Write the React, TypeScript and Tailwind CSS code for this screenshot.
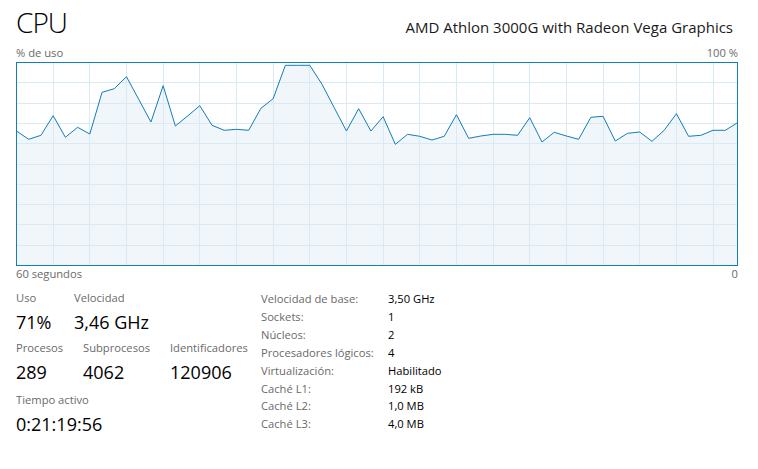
const usage = [
  131, 139.3, 135.3, 115.7, 137.3, 127.3, 134, 92.3, 88.7, 76.7, 99.3, 122, 85.7, 126, 116, 105.7, 125.3, 130.3, 129.3, 130.3,
  108.3, 98.7, 65.3, 65.3, 65.3, 84.3, 107.7, 131, 108.7, 131, 116.7, 144.3, 134.3, 136.3, 140, 136.3, 114.7, 138.3, 136, 134.3,
  134.3, 135.3, 117.7, 142, 132.3, 136, 139.3, 117.3, 116.3, 141, 133.3, 132, 141.3, 130.3, 113.7, 136.3, 135.3, 130.3, 130.3, 122.7,
];

const W = 722;
const H = 204;

const CpuGraph = () => {
  const pts = usage.map((y, i) => [0.5 + (i * 721) / 59, y - 62]);
  const line = pts.map(p => p.join(",")).join(" ");
  const area = `0.5,${H - 0.5} ${line} ${W - 0.5},${H - 0.5}`;
  const cols = Array.from({ length: 19 }, (_, k) => Math.round(36.67 * (k + 1)) + 0.5);
  const rows = Array.from({ length: 9 }, (_, k) => Math.round(20.3 * (k + 1)) + 0.5);

  return (
    <svg width={W} height={H} viewBox={`0 0 ${W} ${H}`} className="block">
      <rect x="0" y="0" width={W} height={H} fill="#ffffff" />
      <polygon points={area} fill="#f1f6fa" />
      {cols.map(x => (
        <line key={"c" + x} x1={x} y1="0" x2={x} y2={H} stroke="#d9eaf4" strokeWidth="1" />
      ))}
      {rows.map(y => (
        <line key={"r" + y} x1="0" y1={y} x2={W} y2={y} stroke="#d9eaf4" strokeWidth="1" />
      ))}
      <polyline points={line} fill="none" stroke="#117dbb" strokeWidth="1" strokeLinejoin="round" />
      <rect x="0.5" y="0.5" width={W - 1} height={H - 1} fill="none" stroke="#117dbb" strokeWidth="1" />
    </svg>
  );
};

const Stat = (props: { label: string; value: string; w?: string }) => (
  <div className={`flex flex-col ${props.w ?? ""}`}>
    <span className="text-[11.2px] leading-[16px] text-[#6a6a6a]">{props.label}</span>
    <span className="text-[18px] leading-[24px] text-black mt-[4px]">{props.value}</span>
  </div>
);

const details = [
  ["Velocidad de base:", "3,50 GHz"],
  ["Sockets:", "1"],
  ["Núcleos:", "2"],
  ["Procesadores lógicos:", "4"],
  ["Virtualización:", "Habilitado"],
  ["Caché L1:", "192 kB"],
  ["Caché L2:", "1,0 MB"],
  ["Caché L3:", "4,0 MB"],
];

export default function App() {
  return (
    <div className="w-[758px] h-[469px] bg-white px-4 font-['Open_Sans',sans-serif] overflow-hidden">
      {/* header */}
      <div className="flex items-baseline justify-between h-[45px] pt-[4px] pr-[9px]">
        <span className="text-[28px] leading-[36px] font-light tracking-[-1px] text-black">CPU</span>
        <span className="text-[15px] leading-[20px] text-[#1a1a1a]">AMD Athlon 3000G with Radeon Vega Graphics</span>
      </div>

      <div className="flex justify-between h-[17px] w-[722px] text-[11.2px] leading-[16px] text-[#6a6a6a]">
        <span>% de uso</span>
        <span>100 %</span>
      </div>

      <CpuGraph />

      <div className="flex justify-between h-[16px] w-[722px] text-[11.2px] leading-[16px] text-[#6a6a6a]">
        <span>60 segundos</span>
        <span>0</span>
      </div>

      {/* stats */}
      <div className="flex mt-[8px]">
        <div className="w-[245px] flex flex-col">
          <div className="flex">
            <Stat label="Uso" value="71%" w="w-[58px]" />
            <Stat label="Velocidad" value="3,46 GHz" />
          </div>
          <div className="flex mt-[6px]">
            <Stat label="Procesos" value="289" w="w-[67px]" />
            <Stat label="Subprocesos" value="4062" w="w-[87px]" />
            <Stat label="Identificadores" value="120906" />
          </div>
          <div className="flex mt-[8px]">
            <Stat label="Tiempo activo" value="0:21:19:56" />
          </div>
        </div>

        <div className="flex flex-col text-[11.2px] leading-[17.9px]">
          {details.map(([k, v]) => (
            <div key={k} className="flex">
              <span className="w-[127px] text-[#6a6a6a]">{k}</span>
              <span className="text-black">{v}</span>
            </div>
          ))}
        </div>
      </div>
    </div>
  );
}
